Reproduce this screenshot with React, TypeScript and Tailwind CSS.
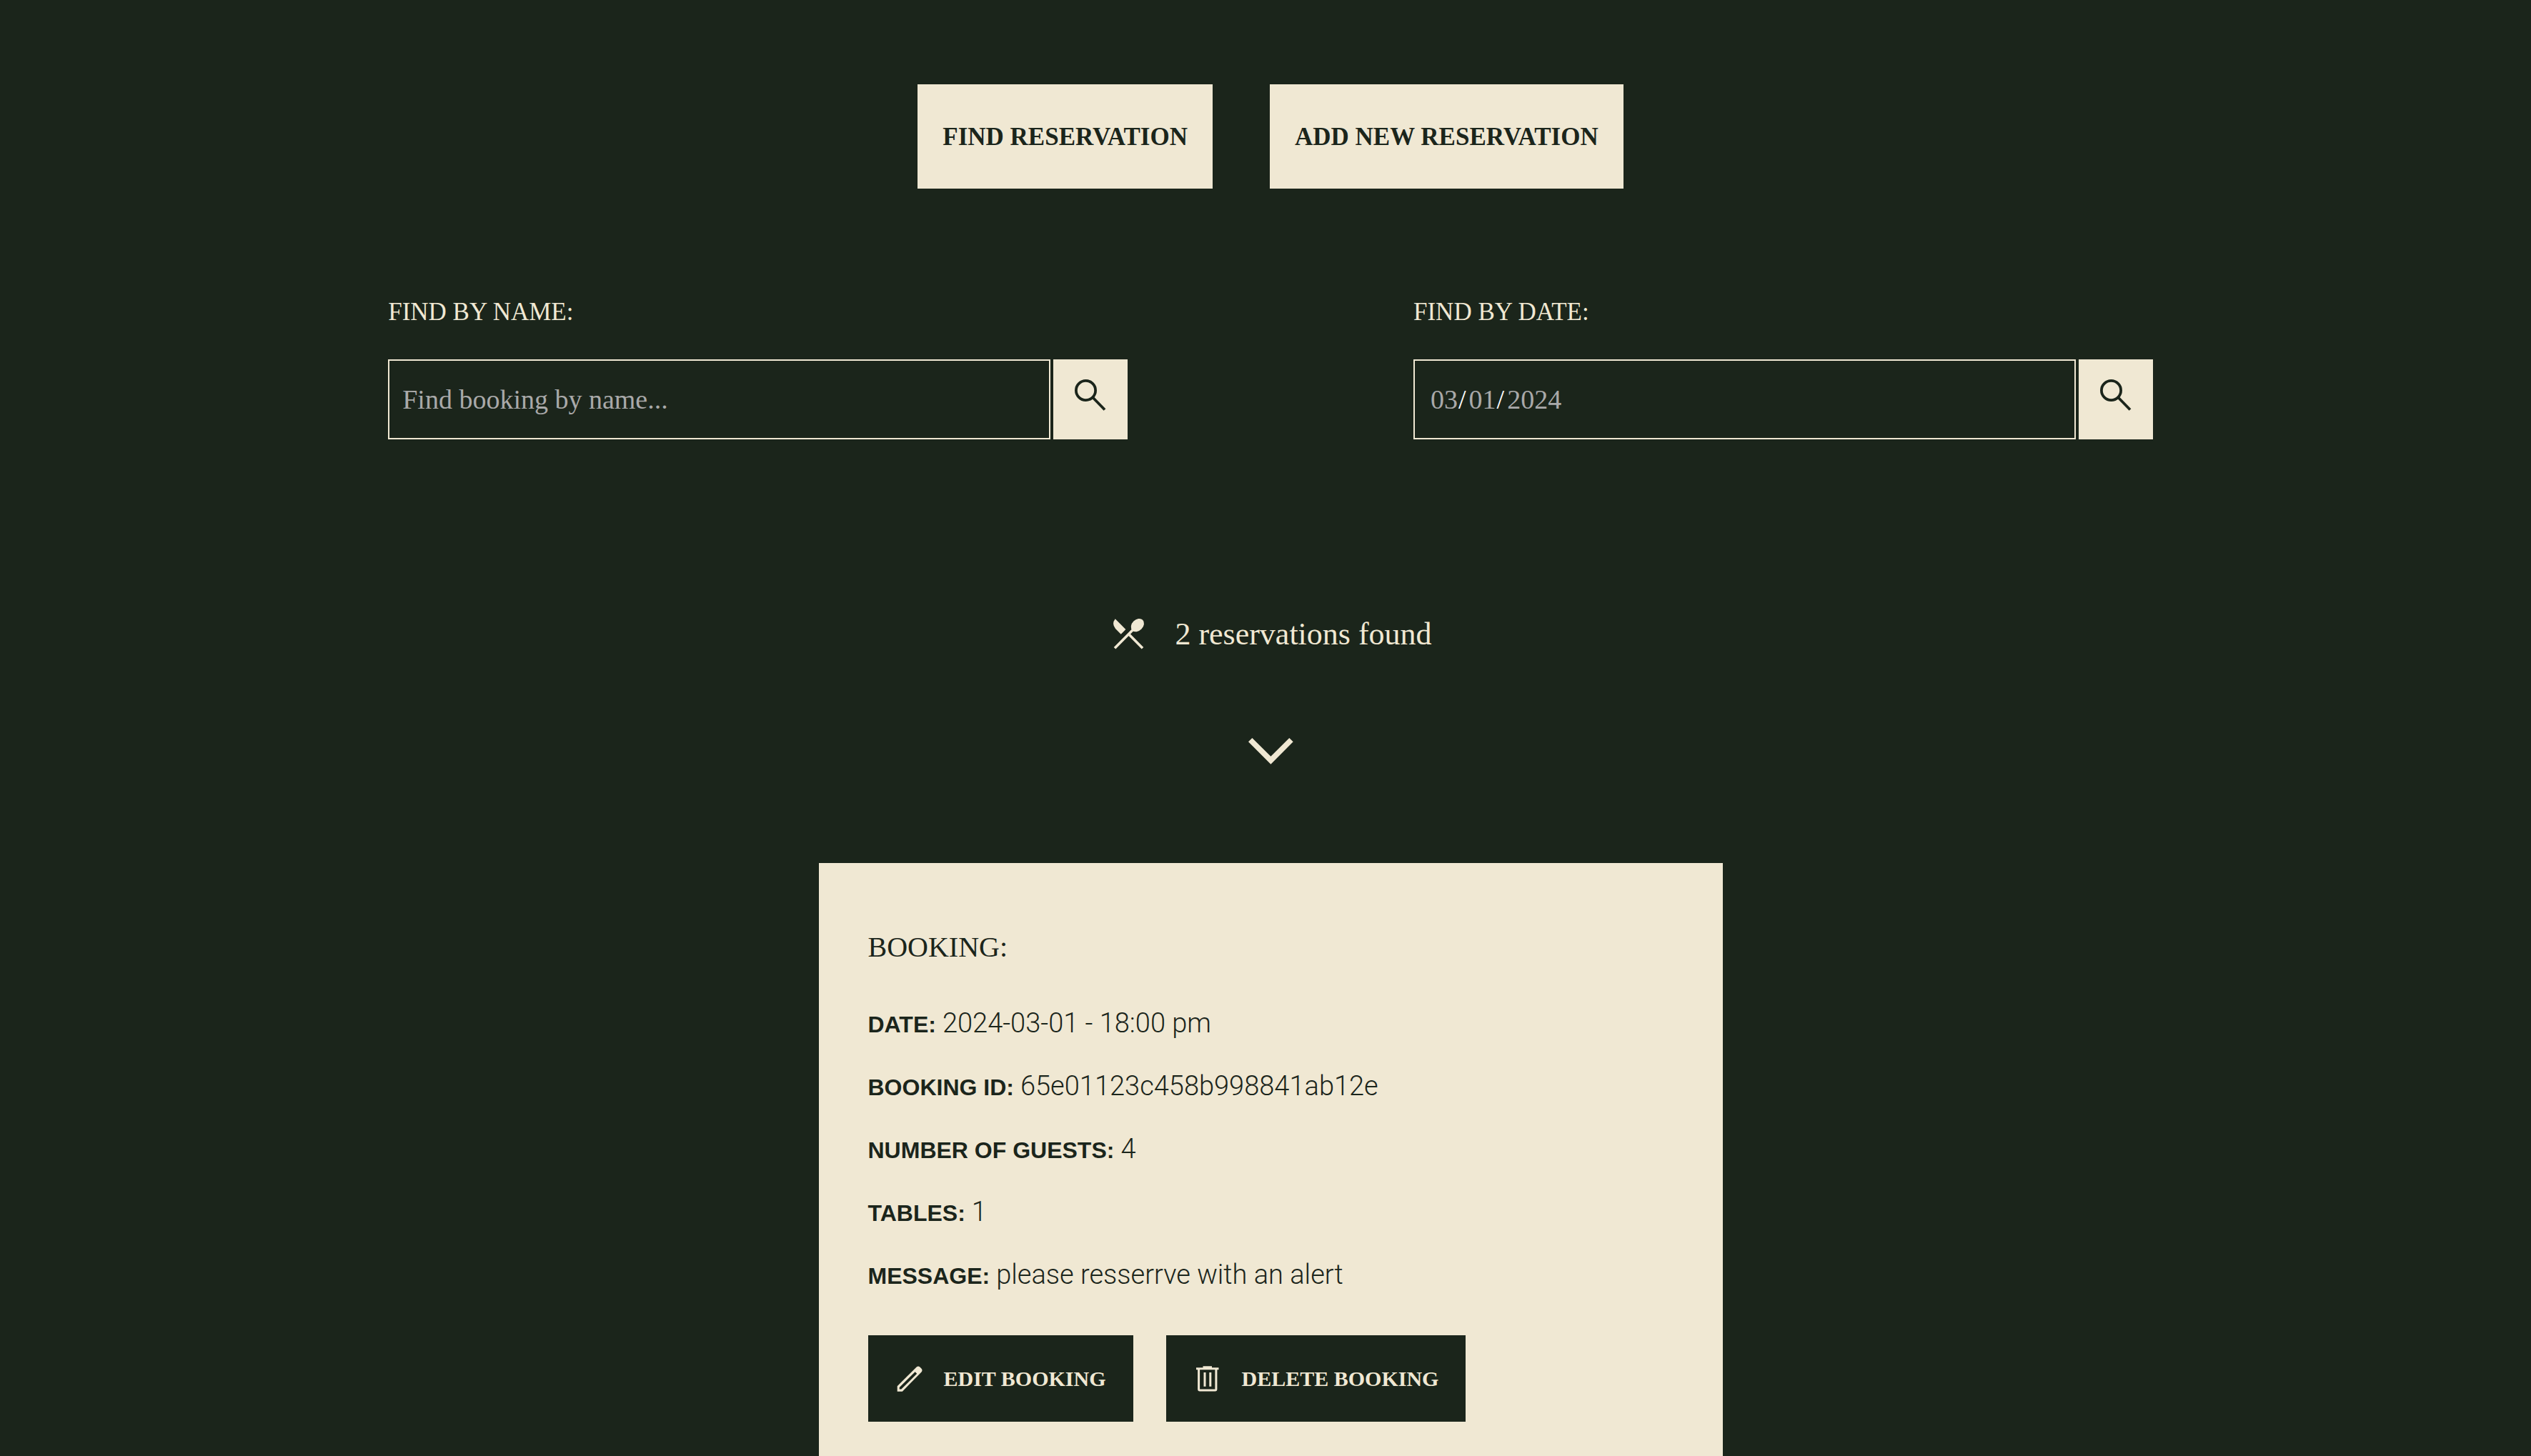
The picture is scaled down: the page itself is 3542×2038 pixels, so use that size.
import type { ReactNode } from "react";

function SearchIcon() {
  return (
    <svg width="44" height="44" viewBox="0 0 44 44" fill="none" stroke="currentColor" strokeWidth="3.8" aria-hidden="true">
      <circle cx="15.5" cy="15.5" r="13.6" />
      <path d="M25.2 25.2 42 42.5" />
    </svg>
  );
}

function CutleryIcon() {
  return (
    <svg width="54" height="54" viewBox="-6 -5 54 54" fill="currentColor" aria-hidden="true">
      <path d="M2.7.3 17.4 15 10.7 21.7 3 14Q-2.7 7 2.7.3Z" />
      <ellipse cx="33.9" cy="9.1" rx="10.3" ry="7.8" transform="rotate(-45 33.9 9.1)" />
      <path d="M27.5 15.5 2 41.3M21.5 21.5 41 41.3" stroke="currentColor" strokeWidth="3.6" fill="none" />
    </svg>
  );
}

function ChevronIcon() {
  return (
    <svg width="63" height="37" viewBox="0 0 63 37" fill="currentColor" aria-hidden="true">
      <path d="M0 5.3 5.4 0 31.4 25.8 57.3 0l5.4 5.3-31.3 31.5z" />
    </svg>
  );
}

function PencilIcon() {
  return (
    <svg width="36" height="36" viewBox="0 0 36 36" fill="currentColor" fillRule="evenodd" aria-hidden="true">
      <path d="M.7 35.7V28.2L27.6 1.4Q30-.6 32.4 1.4l2 2.1Q36.6 6 34.5 8.4L7.8 35.7ZM3.7 32.6H6.3L28.2 10.8 25.6 8.2 3.7 30Z" />
    </svg>
  );
}

function TrashIcon() {
  return (
    <svg width="32" height="36" viewBox="0 0 32 36" fill="none" stroke="currentColor" strokeWidth="3" aria-hidden="true">
      <path d="M0 3.7H31.5M9.5 1.7H22" />
      <path d="M3.6 4V32.5Q3.6 34 5.1 34H26.4Q27.9 34 27.9 32.5V4" />
      <path d="M12 9V28.7M19.8 9V28.7" />
    </svg>
  );
}

function TopButton({ children }: { children: ReactNode }) {
  return (
    <button type="button" className="h-[146px] bg-[#f0e8d3] px-[35px] pt-0.5 text-[35px] leading-[48px] font-bold text-[#1b251b]">
      {children}
    </button>
  );
}

const fieldClass =
  "h-28 w-full min-w-0 flex-1 appearance-none rounded-none border-2 border-[#f0e8d3] bg-transparent px-[18px] text-[38px] text-white outline-none placeholder:text-[#a9a9a9] placeholder:opacity-100";

const dateFieldClass =
  "[&::-webkit-calendar-picker-indicator]:opacity-0 [&::-webkit-datetime-edit-month-field]:pl-1 [&::-webkit-datetime-edit-month-field]:text-[#a9a9a9] [&::-webkit-datetime-edit-day-field]:pl-1 [&::-webkit-datetime-edit-day-field]:text-[#a9a9a9] [&::-webkit-datetime-edit-year-field]:pl-1 [&::-webkit-datetime-edit-year-field]:text-[#a9a9a9]";

function SearchField({ id, label, children }: { id: string; label: string; children: ReactNode }) {
  return (
    <form className="flex flex-col gap-[42px]" onSubmit={(e) => e.preventDefault()}>
      <label htmlFor={id} className="text-[35px] leading-[48px]">
        {label}
      </label>
      <div className="flex gap-1">
        {children}
        <button type="submit" aria-label="Search" className="flex h-28 w-[104px] shrink-0 items-center justify-center bg-[#f0e8d3] pb-3 text-[#1b251b]">
          <SearchIcon />
        </button>
      </div>
    </form>
  );
}

function CardButton({ icon, children }: { icon: ReactNode; children: ReactNode }) {
  return (
    <button type="button" className="flex h-[121px] items-center gap-7 bg-[#1b251b] px-[38px] text-[30px] leading-[48px] font-bold text-[#f0e8d3]">
      <span className="flex w-10 justify-center">{icon}</span>
      {children}
    </button>
  );
}

const details = [
  { label: "DATE:", value: "2024-03-01 - 18:00 pm" },
  { label: "BOOKING ID:", value: "65e01123c458b998841ab12e" },
  { label: "NUMBER OF GUESTS:", value: "4" },
  { label: "TABLES:", value: "1" },
  { label: "MESSAGE:", value: "please resserrve with an alert" },
];

export default function App() {
  return (
    <main className="flex min-h-screen flex-col bg-[#1b251b] pt-[118px] pl-[14px] font-['Liberation_Serif',serif] text-[#f0e8d3]">
      <nav className="flex flex-wrap justify-center gap-20">
        <TopButton>FIND RESERVATION</TopButton>
        <TopButton>ADD NEW RESERVATION</TopButton>
      </nav>

      <section className="mx-[15%] mt-[149px] grid grid-cols-2 gap-[400px]">
        <SearchField id="by-name" label="FIND BY NAME:">
          <input id="by-name" type="text" placeholder="Find booking by name..." className={fieldClass} />
        </SearchField>
        <SearchField id="by-date" label="FIND BY DATE:">
          <input id="by-date" type="date" defaultValue="2024-03-01" className={`${fieldClass} ${dateFieldClass}`} />
        </SearchField>
      </section>

      <section className="mt-[246px] flex flex-1 flex-col items-center">
        <div className="flex items-center gap-[38px]">
          <CutleryIcon />
          <p className="text-[44px] leading-[54px]">2 reservations found</p>
        </div>
        <div className="mt-[118px]">
          <ChevronIcon />
        </div>

        <article className="mt-[138px] w-full max-w-[1265px] flex-1 bg-[#f0e8d3] px-[69px] pt-[94px] pb-10 text-[#1b251b]">
          <h2 className="text-[40px] leading-[48px]">BOOKING:</h2>
          <dl className="mt-[58px] flex flex-col gap-[38px]">
            {details.map((d) => (
              <div key={d.label} className="flex items-baseline gap-[9px] font-['Liberation_Sans',sans-serif] leading-[48px]">
                <dt className="text-[32px] font-bold">{d.label}</dt>
                <dd className="font-['Roboto','Liberation_Sans',sans-serif] text-[38px] font-light">{d.value}</dd>
              </div>
            ))}
          </dl>
          <div className="mt-[59px] flex flex-wrap gap-[46px]">
            <CardButton icon={<PencilIcon />}>EDIT BOOKING</CardButton>
            <CardButton icon={<TrashIcon />}>DELETE BOOKING</CardButton>
          </div>
        </article>
      </section>
    </main>
  );
}
